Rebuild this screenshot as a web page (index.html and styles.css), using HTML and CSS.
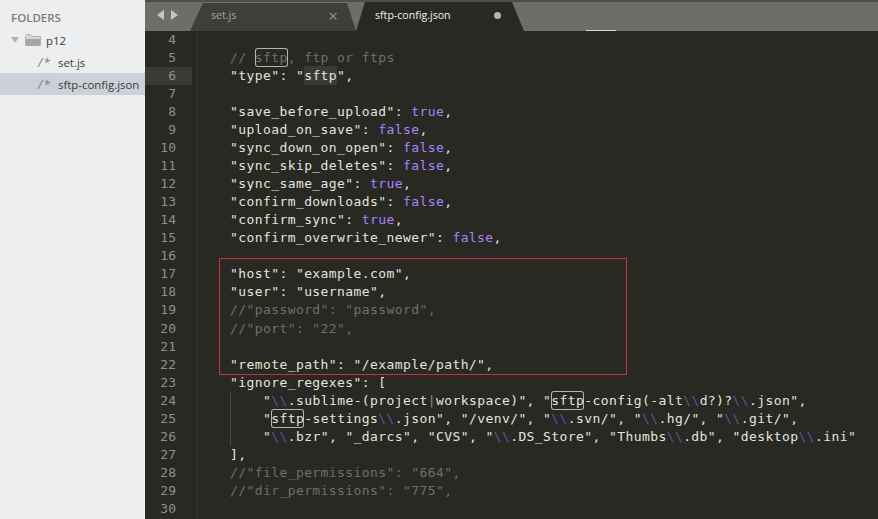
FILE: index.html
```
<!DOCTYPE html>
<html lang="en">
<head>
<meta charset="utf-8">
<title>sftp-config.json</title>
<link rel="stylesheet" href="styles.css">
</head>
<body>
<div class="app">
  <aside class="sidebar">
    <div class="folders-title">FOLDERS</div>
    <div class="row row-folder">
      <span class="disclosure"></span>
      <svg class="folder" width="16" height="12" viewBox="0 0 16 12"><path d="M0.5 1.5 L0.5 11.5 L15.5 11.5 L15.5 2.5 L6.5 2.5 L5.5 0.5 L1.5 0.5 Z" fill="#d6d8d9" stroke="#b0b2b3"/><rect x="1" y="5" width="14" height="6.5" fill="#a3a5a6"/></svg>
      <span>p12</span>
    </div>
    <div class="row row-file"><span class="file-icon">/*</span><span>set.js</span></div>
    <div class="row row-file selected"><span class="file-icon">/*</span><span>sftp-config.json</span></div>
  </aside>
  <main class="main">
    <div class="tabbar">
      <div class="nav"><span class="arrow arrow-left"></span><span class="arrow arrow-right"></span></div>
      <div class="tab tab-inactive"><span>set.js</span><span class="close">×</span></div>
      <div class="tab tab-active"><span>sftp-config.json</span><span class="dot"></span></div>
      <div class="minimap-sliver"></div>
    </div>
    <div class="editor">
      <div class="gutter">
        <div>4</div><div>5</div><div class="current">6</div><div>7</div><div>8</div><div>9</div><div>10</div><div>11</div><div>12</div><div>13</div><div>14</div><div>15</div><div>16</div><div>17</div><div>18</div><div>19</div><div>20</div><div>21</div><div>22</div><div>23</div><div>24</div><div>25</div><div>26</div><div>27</div><div>28</div><div>29</div><div>30</div>
      </div>
      <div class="code">
        <div class="line">&nbsp;</div>
        <div class="line cm">// <span class="match">sftp</span>, ftp or ftps</div>
        <div class="line">"type": "<span class="same">sftp</span>",</div>
        <div class="line">&nbsp;</div>
        <div class="line">"save_before_upload": <span class="kw">true</span>,</div>
        <div class="line">"upload_on_save": <span class="kw">false</span>,</div>
        <div class="line">"sync_down_on_open": <span class="kw">false</span>,</div>
        <div class="line">"sync_skip_deletes": <span class="kw">false</span>,</div>
        <div class="line">"sync_same_age": <span class="kw">true</span>,</div>
        <div class="line">"confirm_downloads": <span class="kw">false</span>,</div>
        <div class="line">"confirm_sync": <span class="kw">true</span>,</div>
        <div class="line">"confirm_overwrite_newer": <span class="kw">false</span>,</div>
        <div class="line">&nbsp;</div>
        <div class="line">"host": "example.com",</div>
        <div class="line">"user": "username",</div>
        <div class="line cm">//"password": "password",</div>
        <div class="line cm">//"port": "22",</div>
        <div class="line">&nbsp;</div>
        <div class="line">"remote_path": "/example/path/",</div>
        <div class="line">"ignore_regexes": [</div>
        <div class="guide">
          <div class="line">"<span class="esc">\\</span>.sublime-(project<span class="pipe">|</span>workspace)", "<span class="match">sftp</span>-config(-alt<span class="esc">\\</span>d?)?<span class="esc">\\</span>.json",</div>
          <div class="line">"<span class="match">sftp</span>-settings<span class="esc">\\</span>.json", "/venv/", "<span class="esc">\\</span>.svn/", "<span class="esc">\\</span>.hg/", "<span class="esc">\\</span>.git/",</div>
          <div class="line">"<span class="esc">\\</span>.bzr", "_darcs", "CVS", "<span class="esc">\\</span>.DS_Store", "Thumbs<span class="esc">\\</span>.db", "desktop<span class="esc">\\</span>.ini"</div>
        </div>
        <div class="line">],</div>
        <div class="line cm">//"file_permissions": "664",</div>
        <div class="line cm">//"dir_permissions": "775",</div>
        <div class="line">&nbsp;</div>
        <div class="annotation"></div>
      </div>
    </div>
  </main>
</div>
</body>
</html>
```
FILE: styles.css
```
* { box-sizing: border-box; }
html, body { margin: 0; height: 100%; overflow: hidden; }
.app { display: flex; width: 878px; height: 519px; overflow: hidden; }

.sidebar {
  width: 145px;
  flex: none;
  background: #eceef0;
  padding-top: 7px;
  font-family: "Open Sans", "Noto Sans", sans-serif;
  font-size: 11.4px;
  color: #3b3b3b;
}
.folders-title { height: 22px; line-height: 22px; padding-left: 11px; font-weight: 600; font-size: 11.5px; color: #7a7c7e; }
.row { height: 22px; display: flex; align-items: center; white-space: nowrap; }
.row-folder { padding-left: 11px; font-size: 11.4px; }
.disclosure { width: 0; height: 0; border-left: 4px solid transparent; border-right: 4px solid transparent; border-top: 6px solid #b0b2b4; margin-right: 6px; }
.folder { margin-right: 5px; }
.row-file { padding-left: 38px; }
.file-icon { width: 20px; flex: none; color: #77797b; font-style: italic; font-size: 12px; letter-spacing: 1px; }
.selected { background: #ccd0d8; }

.main { flex: 1; min-width: 0; display: flex; flex-direction: column; background: #282923; }
.tabbar {
  height: 31px;
  flex: none;
  display: flex;
  position: relative;
  background: #6d6e69;
  border-top: 2px solid #4e4f4a;
  font-family: "Open Sans", "Noto Sans", sans-serif;
  font-size: 10.6px;
}
.nav { width: 45px; flex: none; display: flex; align-items: center; gap: 7px; padding: 0 0 3px 12px; }
.arrow { width: 0; height: 0; border-top: 5px solid transparent; border-bottom: 5px solid transparent; }
.arrow-left { border-right: 7px solid #c6c7c3; }
.arrow-right { border-left: 7px solid #c6c7c3; }
.tab { display: flex; align-items: center; justify-content: space-between; flex: none; padding-bottom: 3px; }
.tab-inactive {
  width: 166px;
  padding-left: 21px;
  padding-right: 18px;
  background: #3e3f3a;
  color: #a3a49f;
  clip-path: polygon(0 100%, 13px 1px, 157px 1px, 100% 100%);
}
.tab-active {
  width: 168px;
  padding-left: 19px;
  padding-right: 23px;
  background: #282923;
  color: #f1f1ee;
  clip-path: polygon(0 100%, 9px 0, 156px 0, 100% 100%);
}
.close { font-size: 17px; line-height: 1; color: #8f908b; }
.dot { width: 7px; height: 7px; border-radius: 50%; background: #b3b3b0; }
.minimap-sliver { position: absolute; left: 441px; bottom: 0; width: 30px; height: 1px; background: #d8d8d4; }

.editor {
  flex: 1;
  min-height: 0;
  display: flex;
  overflow: hidden;
  font-family: "DejaVu Sans Mono", "Liberation Mono", monospace;
  font-size: 13px;
  line-height: 18.04px;
  letter-spacing: 0.41px;
  color: #e4e4de;
}
.gutter { width: 53px; flex: none; border-right: 1px solid #36372f; color: #8f908a; text-align: right; }
.gutter div { width: 47px; padding-right: 16px; letter-spacing: 0; height: 18.04px; }
.gutter .current { background: #3a3b35; }

.code { flex: 1; min-width: 0; position: relative; padding-left: 32px; }
.line { height: 18.04px; white-space: pre; }
.guide { border-left: 1px solid #46473f; padding-left: 32px; }
.cm { color: #6f7067; }
.kw { color: #ae81ff; }
.esc { color: #5d50a8; }
.pipe { color: #8a8a84; }
.match { box-shadow: inset 0 0 0 1px #b5b5ad; border-radius: 3px; padding: 2px 0; }
.same { background: #3a3b35; padding: 2px 0; }
.annotation { position: absolute; left: 21px; top: 227px; width: 408px; height: 117px; border: 1px solid #c4323e; }
```
